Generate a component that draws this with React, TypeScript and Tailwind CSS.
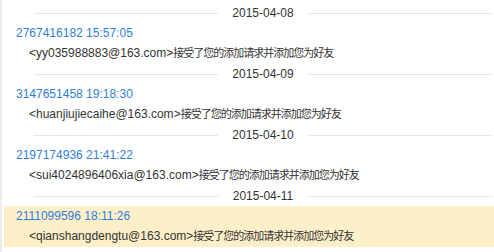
import React from "react";

type Entry = { date: string; uid: string; time: string; email: string; active?: boolean };

const entries: Entry[] = [
  { date: "2015-04-08", uid: "2767416182", time: "15:57:05", email: "yy035988883@163.com" },
  { date: "2015-04-09", uid: "3147651458", time: "19:18:30", email: "huanjiujiecaihe@163.com" },
  { date: "2015-04-10", uid: "2197174936", time: "21:41:22", email: "sui4024896406xia@163.com" },
  { date: "2015-04-11", uid: "2111099596", time: "18:11:26", email: "qianshangdengtu@163.com", active: true },
];

export default function App() {
  return (
    <div
      className="w-[494px] h-[252px] overflow-hidden bg-white border-l-2 border-[#ececec] pt-[3px] pl-[2px] text-[12px] text-[#333]"
      style={{ fontFamily: '"Liberation Sans", Arial, "Noto Sans CJK SC", sans-serif' }}
    >
      {entries.map((e) => (
        <div key={e.uid}>
          <div className="h-[20px] flex items-center pl-[30px] pr-[2px] gap-[14px]">
            <div className="flex-1 h-px bg-[#e6e6e6]" />
            <span className="leading-none">{e.date}</span>
            <div className="flex-1 h-px bg-[#e6e6e6]" />
          </div>
          <div className={e.active ? "bg-[#fdefc8]" : ""}>
            <div className="h-[19px] flex items-center pl-[12px] text-[#2f80d8]">
              {e.uid} {e.time}
            </div>
            <div className="h-[22px] flex items-center pl-[25px] whitespace-nowrap">
              <span>&lt;{e.email}&gt;</span>
              <span className="text-[11px] tracking-[-1px]">接受了您的添加请求并添加您为好友</span>
            </div>
          </div>
        </div>
      ))}
    </div>
  );
}
